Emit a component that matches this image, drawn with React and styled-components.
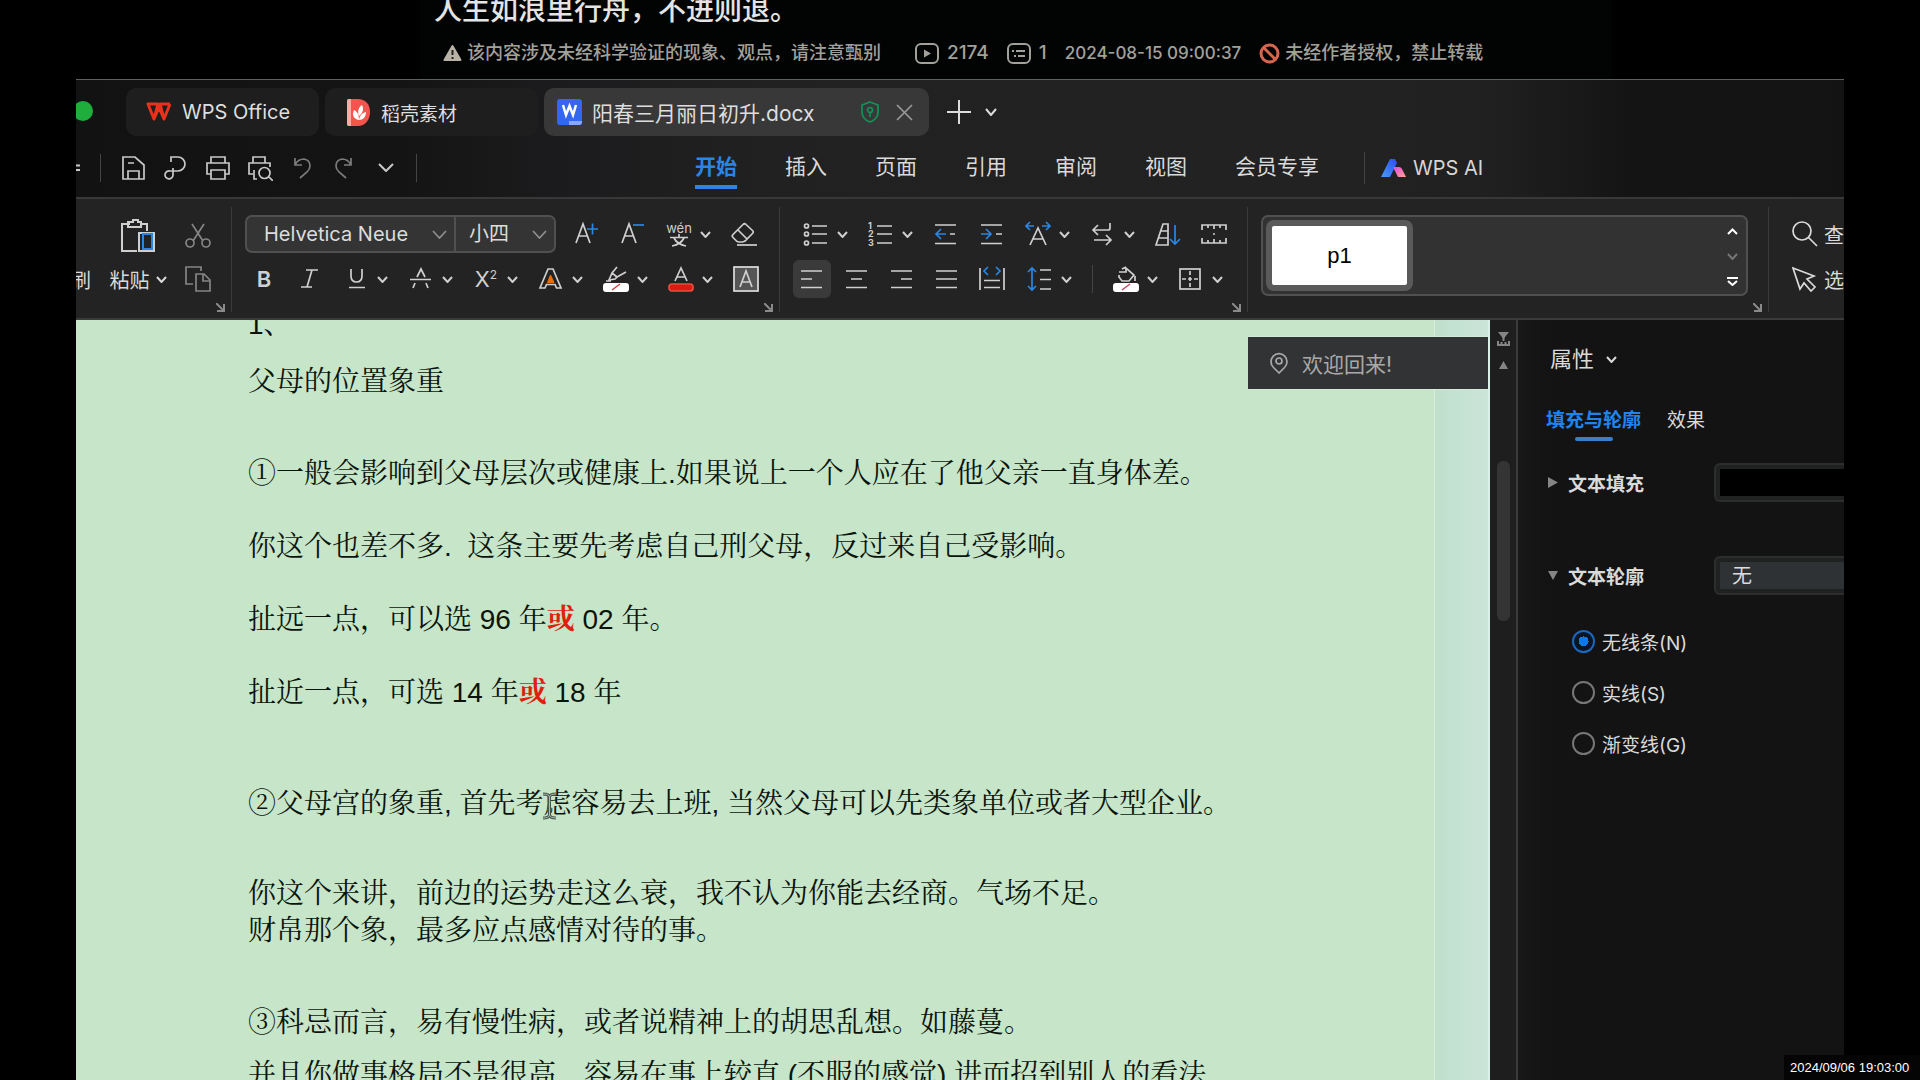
import React from "react";
import styled, { createGlobalStyle } from "styled-components";

const UI = `Inter, "Noto Sans CJK SC", sans-serif`;
const BLUE = "#2b86e3";

const Global = createGlobalStyle`
  *, *::before, *::after { box-sizing: border-box; }
  html, body, #root { height: 100%; }
  body { margin: 0; background: #000; color: #dcdcdc; font-family: ${UI}; overflow: hidden; }
  button { background: none; border: 0; padding: 0; margin: 0; color: inherit; font: inherit; cursor: pointer; }
  p { margin: 0; }
`;

const Page = styled.div`
  display: flex;
  flex-direction: column;
  height: 100vh;
  padding: 0 76px;
  background: #000;
`;

/* ---------- video caption ---------- */
const Caption = styled.header`
  flex: none;
  height: 79px;
  margin: 0 232px 0 344px;
  background: #020403;
  overflow: hidden;
`;
const Title = styled.h1`
  margin: -10px 0 0;
  padding-left: 14px;
  font-size: 28px;
  line-height: 40px;
  font-weight: 500;
  color: #e4e4e4;
`;
const Meta = styled.div`
  display: flex;
  align-items: center;
  padding: 11px 0 0 23px;
  gap: 18px;
  font-size: 18px;
  line-height: 24px;
  font-weight: 500;
  color: #a2a09b;
  white-space: nowrap;
`;
const MetaItem = styled.span`
  display: flex;
  align-items: center;
  gap: ${(p) => p.$gap || 5}px;
  font-size: ${(p) => p.$size || 18}px;
  margin-right: ${(p) => p.$mr || 0}px;
`;

/* ---------- window ---------- */
const Window = styled.main`
  flex: 1;
  min-height: 0;
  display: flex;
  flex-direction: column;
  overflow: hidden;
  border-top: 1px solid #5e6161;
  background: linear-gradient(90deg, #121212 0, #141414 18%, #1c1c1e 28%, #212121 40%, #222 72%, #202020 80%, #141414 88%, #131313 100%);
`;
const TabBar = styled.nav`
  flex: none;
  display: flex;
  align-items: center;
  height: 66px;
`;
const Light = styled.button`
  flex: none;
  width: 20px;
  height: 20px;
  margin: 0 33px 4px -3px;
  border-radius: 50%;
  background: #1fae3c;
`;
const Tab = styled.button`
  display: flex;
  align-items: center;
  gap: ${(p) => p.$gap || 10}px;
  width: ${(p) => p.$w}px;
  height: 48px;
  margin: 0 6px 2px 0;
  padding: 0 16px 0 ${(p) => p.$pad || 20}px;
  border-radius: 10px;
  background: ${(p) => (p.$active ? "#383838" : "#1e1e1e")};
  font-size: ${(p) => p.$size || 20}px;
  color: #dedede;
  white-space: nowrap;
`;
const Grow = styled.span`
  flex: 1;
`;
const TabAction = styled.button`
  display: flex;
  margin: 0 0 2px ${(p) => p.$ml}px;
`;

const ToolRow = styled.div`
  flex: none;
  display: flex;
  align-items: center;
  height: 53px;
  padding-bottom: 8px;
  border-bottom: 2px solid #383838;
`;
const Quick = styled.div`
  display: flex;
  align-items: center;
  gap: 16px;
  margin: 0 17px 0 20px;
`;
const QButton = styled.button`
  display: flex;
  width: ${(p) => (p.$cut ? 24 : 26)}px;
  height: 26px;
  align-items: center;
  justify-content: ${(p) => (p.$cut ? "flex-start" : "center")};
  color: ${(p) => (p.$dim ? "#7c7c7c" : "#c9c9c9")};
`;
const Rule = styled.span`
  flex: none;
  width: 1px;
  height: ${(p) => p.$h || 28}px;
  background: #444;
`;
const Menus = styled.nav`
  display: flex;
  align-items: center;
  gap: 48px;
  margin: 0 45px 0 278px;
`;
const Menu = styled.button`
  height: 42px;
  padding-top: 2px;
  border-bottom: 4px solid ${(p) => (p.$active ? BLUE : "transparent")};
  color: ${(p) => (p.$active ? BLUE : "#dadada")};
  font-size: 21px;
  font-weight: ${(p) => (p.$active ? 600 : 400)};
  white-space: nowrap;
  line-height: 30px;
`;
const AiButton = styled.button`
  display: flex;
  align-items: center;
  gap: 7px;
  margin-left: 16px;
  font-size: 20px;
  color: #d6d6d6;
  white-space: nowrap;
`;

/* ---------- ribbon ---------- */
const Ribbon = styled.section`
  flex: none;
  display: flex;
  height: 121px;
  background: #232323;
  border-bottom: 2px solid #3a3c3a;
  color: #cfcfcf;
`;
const Group = styled.div`
  position: relative;
  display: flex;
  flex-direction: column;
  flex: ${(p) => (p.$grow ? "1 1 0" : "none")};
  min-width: 0;
  gap: 7px;
  margin: 8px 0 6px;
  padding: 8px ${(p) => p.$pr ?? 19}px 0 ${(p) => p.$pl ?? 13}px;
  border-right: ${(p) => (p.$last ? "0" : "1px solid #3a3a3a")};
`;
const Row = styled.div`
  display: flex;
  align-items: center;
  height: 38px;
  gap: ${(p) => p.$gap ?? 20}px;
  padding-left: ${(p) => p.$pl || 0}px;
`;
const Launcher = styled.button`
  position: absolute;
  right: 6px;
  bottom: 0;
  display: flex;
  color: #8a8a8a;
`;
const Clip = styled.div`
  display: grid;
  grid-template-columns: 15px 56px 26px;
  column-gap: 19px;
  align-items: center;
  justify-items: center;
  grid-template-rows: 42px 36px;
  row-gap: 4px;
  font-size: 20px;
`;
const Brush = styled.button`
  width: 20px;
  margin-left: -5px;
  color: #dadada;
  grid-row: 2;
`;
const PasteButton = styled.button`
  display: flex;
  align-items: center;
  gap: 6px;
  color: #dadada;
  white-space: nowrap;
`;
const ToolButton = styled.button`
  position: relative;
  display: flex;
  align-items: center;
  gap: 8px;
  flex: none;
  height: 26px;
  color: ${(p) => (p.$dim ? "#858585" : "#cfcfcf")};
`;
const AlignButton = styled.button`
  display: flex;
  align-items: center;
  justify-content: center;
  width: 38px;
  height: 38px;
  border-radius: 6px;
  background: ${(p) => (p.$active ? "#3a3a3a" : "transparent")};
  color: #cfcfcf;
`;
const Combo = styled.div`
  display: flex;
  width: 311px;
  height: 38px;
  border: 2px solid #505050;
  border-radius: 7px;
  background: #343434;
`;
const ComboPart = styled.label`
  display: flex;
  align-items: center;
  flex: ${(p) => (p.$grow ? 1 : "none")};
  width: ${(p) => p.$w || "auto"};
  padding: 0 7px 0 ${(p) => p.$pl}px;
  border-left: ${(p) => (p.$line ? "2px solid #505050" : "0")};
  color: #8f8f8f;
`;
const Select = styled.select`
  flex: 1;
  min-width: 0;
  appearance: none;
  border: 0;
  padding: 0;
  background: transparent;
  color: #dcdcdc;
  font: 20px/28px ${UI};
  outline: none;
`;
const Gallery = styled.div`
  display: flex;
  justify-content: space-between;
  height: 81px;
  padding: 3px 8px 3px 3px;
  border: 2px solid #505050;
  border-radius: 7px;
  background: #323232;
`;
const StyleCard = styled.button`
  width: 147px;
  height: 71px;
  border: 6px solid #5a5a5a;
  border-radius: 8px;
  background: #fff;
  color: #000;
  font: 22px "Liberation Sans", sans-serif;
`;
const GalleryArrows = styled.div`
  display: flex;
  flex-direction: column;
  justify-content: space-between;
  padding: 8px 0 5px;
`;
const ArrowButton = styled.button`
  display: flex;
  color: ${(p) => (p.$dim ? "#777" : "#fff")};
`;
const SideButton = styled.button`
  display: flex;
  align-items: center;
  gap: 6px;
  font-size: 20px;
  color: #dadada;
`;

/* ---------- body ---------- */
const Body = styled.section`
  flex: 1;
  min-height: 0;
  display: flex;
`;
const Canvas = styled.div`
  position: relative;
  flex: 1;
  min-width: 0;
  display: flex;
  overflow: hidden;
  border-right: 2px solid #dcefe6;
  background: linear-gradient(90deg, #bfe0cb, #cbe5d9) right / 54px 100% no-repeat;
`;
const Sheet = styled.article`
  flex: 1;
  margin-right: 53px;
  padding: 0 0 0 172px;
  border-right: 1px solid #d8eed8;
  background: #c7e5c9;
  color: #0b140c;
  font-family: "Liberation Sans", "Songti SC", "Noto Serif CJK SC", "Noto Sans CJK SC", sans-serif;
  font-size: 28px;
  line-height: 37px;
  font-weight: 400;
  white-space: pre;
  overflow: hidden;
`;
const Para = styled.p`
  margin-top: ${(p) => p.$mt}px;
`;
const Red = styled.b`
  color: #e0200c;
  font-weight: 700;
`;
const Toast = styled.div`
  position: absolute;
  top: 16px;
  right: 0;
  display: flex;
  align-items: center;
  gap: 14px;
  width: 240px;
  height: 54px;
  padding: 0 0 0 22px;
  border: 1px solid #d4ead9;
  border-width: 1px 0;
  background: #323335;
  color: #a9a9a9;
  font-size: 21px;
`;
const Caret = styled.svg`
  position: absolute;
  left: 466px;
  top: 472px;
`;
const ScrollBar = styled.div`
  flex: none;
  display: flex;
  flex-direction: column;
  align-items: center;
  width: 28px;
  padding-top: 12px;
  background: #1e1e1e;
  border-right: 2px solid #3b3b3b;
  color: #858585;
`;
const Thumb = styled.div`
  width: 13px;
  height: 160px;
  margin-top: 92px;
  border-radius: 6px;
  background: #343434;
`;
const Up = styled.button`
  display: flex;
  margin-top: 15px;
`;
const Panel = styled.aside`
  flex: none;
  width: 326px;
  overflow: hidden;
  padding: 23px 0 0 28px;
  background: linear-gradient(90deg, #181818, #131313 30px);
  font-size: 19px;
  color: #dadada;
`;
const PanelTitle = styled.button`
  display: flex;
  align-items: center;
  gap: 12px;
  padding-left: 4px;
  font-size: 22px;
  line-height: 32px;
`;
const PanelTabs = styled.div`
  display: flex;
  gap: 26px;
  margin-top: 32px;
`;
const PanelTab = styled.button`
  display: flex;
  flex-direction: column;
  align-items: center;
  gap: 2px;
  line-height: 28px;
  color: ${(p) => (p.$active ? "#2084ee" : "#dadada")};
  font-weight: ${(p) => (p.$active ? 700 : 400)};
  &::after {
    content: "";
    width: 38px;
    height: 4px;
    border-radius: 2px;
    background: ${(p) => (p.$active ? "#3b7fcb" : "transparent")};
  }
`;
const Field = styled.div`
  display: flex;
  align-items: center;
  height: 39px;
  margin-top: ${(p) => p.$mt}px;
`;
const FieldTitle = styled.button`
  display: flex;
  align-items: center;
  gap: 10px;
  width: 168px;
  padding: 0 0 1px 2px;
  font-weight: 700;
  color: #dadada;
`;
const FieldBox = styled.div`
  flex: 1;
  height: 39px;
  padding: 4px 0 4px 4px;
  border: 2px solid #2c2d2d;
  border-right: 0;
  border-radius: 6px 0 0 6px;
  background: #202121;
`;
const Swatch = styled.button`
  display: block;
  width: 100%;
  height: 100%;
  background: #000;
`;
const LineSelect = styled.select`
  display: block;
  width: 100%;
  height: 100%;
  appearance: none;
  border: 0;
  padding: 1px 0 0 12px;
  background: #2e3234;
  color: #dcdcdc;
  font: 20px/26px ${UI};
`;
const Radios = styled.fieldset`
  display: flex;
  flex-direction: column;
  gap: 23px;
  margin: 32px 0 0;
  padding: 0 0 0 26px;
  border: 0;
`;
const RadioLabel = styled.label`
  display: flex;
  align-items: center;
  gap: 7px;
  height: 28px;
`;
const Radio = styled.input`
  appearance: none;
  width: 23px;
  height: 23px;
  margin: 0;
  border: 2px solid #777;
  border-radius: 50%;
  &:checked {
    border-color: #1868c0;
    background: radial-gradient(circle, #0a78f0 0 5px, #0b1420 5px);
  }
`;
const Clock = styled.time`
  position: fixed;
  right: 0;
  bottom: 0;
  width: 136px;
  height: 25px;
  padding-left: 6px;
  background: #050505;
  color: #fff;
  font: 13px/25px "Liberation Sans", sans-serif;
`;

/* ---------- icons ---------- */
const Drawing = styled.svg`
  flex: none;
  color: ${(p) => p.$tint || "inherit"};
`;
const Svg = ({ w = 26, h = 26, sw = 2, tint, children }) => (
  <Drawing $tint={tint} width={w} height={h} viewBox={`0 0 ${w} ${h}`} fill="none" stroke="currentColor" strokeWidth={sw} aria-hidden="true">
    {children}
  </Drawing>
);
const Chevron = ({ w = 11, h = 7, sw = 2 }) => (
  <Svg w={w} h={h} sw={sw}><path d={`M1 1L${w / 2} ${h - 1}L${w - 1} 1`} /></Svg>
);
const LaunchIcon = () => (
  <Svg w={9} h={9} sw={2}><path d="M0 0L8 8M8 1V8H1" /></Svg>
);

const icons = {
  grow: <><path d="M2 22L9 3L16 22M4.5 15H13.5" /><path stroke={BLUE} d="M13 8H24M18.500 2.500V13.500" /></>,
  shrink: <><path d="M2 22L9 3L16 22M4.5 15H13.5" /><path stroke={BLUE} d="M13 4H24" /></>,
  pinyin: <>
    <text x="13" y="12" textAnchor="middle" fontSize="13" fill="currentColor" stroke="none">wén</text>
    <path d="M13 13V16M4 16.5H22M8 17C10 21 15 24 20 25M18 17C16 21 11 24 6 25" />
  </>,
  eraser: <><path d="M12 3.500Q13.500 2 15 3.500L21.500 9.500Q23 11 21.500 12.500L14 20Q12.500 21 11 21H8Q6.500 21 5.500 20L2 16.500Q.5 15 2 13.500ZM7 9L16 18" /><path d="M6 24H26" /></>,
  bullets: <><circle cx="3.500" cy="5" r="2" /><circle cx="3.500" cy="13" r="2" /><circle cx="3.500" cy="22" r="2" /><path d="M9 5H24M9 13H24M9 22H24" /></>,
  numbers: <>
    <g fontSize="9" fontWeight="700" fill="currentColor" stroke="none"><text x="0" y="8">1</text><text x="0" y="16">2</text><text x="0" y="25">3</text></g>
    <path d="M9 5H24M9 13H24M9 22H24" />
  </>,
  outdent: <><path d="M2 4H23M2 22.500H23M17 13H22" /><path stroke={BLUE} d="M13 13H3M8 8L3 13L8 18" /></>,
  indent: <><path d="M2 4H23M2 22.500H23M17 13H23" /><path stroke={BLUE} d="M2 13H12M7 8L12 13L7 18" /></>,
  scale: <><path d="M5 24L13 7L21 24M8 18H18" /><path stroke={BLUE} d="M9 5H1M5 1L1 5L5 9M17 5H25M21 1L25 5L21 9" /></>,
  wrap: <path d="M20 2V7Q20 9 18 9H3M8 4L3 9L8 14M4 19H21M16 14L21 19L16 24" />,
  sort: <><path d="M8 3H13V24H1ZM6 10H13M4 17H13" /><path stroke={BLUE} d="M20 4V23M15 18L20 23L25 18" /></>,
  ruler: <path d="M1 9V4H25V9M7 4V7M13 4V8M19 4V7M1 17V22H25V17M7 22V19M13 22V18M19 22V19M12 13H14" />,
  italic: <path d="M9 4H21M4 21H15M15 4L10 21" />,
  underline: <path d="M8 3V10Q8 16 13.500 16Q19 16 19 10V3M6 21.500H22" />,
  strike: <path d="M9 11L13 3L17 11M2 13.500H23M7 17L5 22M18 17L20 22" />,
  effect: <><path d="M10 3H15L23 22H18.500L17 18.500H8.500L7 22H2Z" /><path d="M12.500 9L16 16.500H9.500Z" fill="#e8700c" stroke="#e8700c" strokeWidth="1" /></>,
  marker: <><path d="M14 1L9 7M9 7L6 14L12 13L14 11ZM9 7L14 11M14 11L23 6M3 15H8" /><rect x="0" y="17" width="26" height="9" rx="3" fill="#fff" stroke="none" /><path d="M9 24L17 18" stroke="#c44" strokeWidth="1.5" /></>,
  color: <><path d="M7 15L13 2L19 15M9 11H17" /><rect x="1" y="18" width="24" height="7" rx="3" fill="#dd1b10" stroke="#e84c40" /></>,
  shade: <><rect x="1" y="1" width="24" height="24" fill="#555" stroke="#ddd" /><path d="M7 21L13 5L19 21M9 16H17" /></>,
  left: <path d="M2 5H23M2 13H13M2 21.500H23" />,
  center: <path d="M2 5H23M7 13H18M2 21.500H23" />,
  right: <path d="M2 5H23M12 13H23M2 21.500H23" />,
  justify: <path d="M2 5H23M2 13H23M2 21.500H23" />,
  spread: <><path d="M1 2V24M25 2V24M5 14.500H21M5 21.500H21" /><path stroke={BLUE} d="M9 1L5 5L9 9M17 1L21 5L17 9" /></>,
  leading: <><path d="M13 4H24M13 13.500H24M13 23H24" /><path stroke={BLUE} d="M5 2V24M1 6L5 2L9 6M1 20L5 24L9 20" /></>,
  bucket: <><path d="M6 6H13V2L21 9L16 15H9L6 11V9M9 3L13 1" /><path d="M22 10V15" /><rect x="0" y="17" width="26" height="9" rx="3" fill="#fff" stroke="none" /><path d="M9 24L17 18" stroke="#c46" strokeWidth="1.5" /></>,
  borders: <><rect x="2" y="3" width="20" height="20" /><path d="M12 5V22M4 13H21" strokeDasharray="4 2" /></>,
};

const Tool = ({ name, label, drop }) => (
  <ToolButton aria-label={label}>
    <Svg sw={1.7}>{icons[name]}</Svg>
    {drop && <Chevron />}
  </ToolButton>
);
const Align = ({ name, label, active }) => (
  <AlignButton aria-label={label} $active={active}><Svg sw={1.7}>{icons[name]}</Svg></AlignButton>
);
const TextTool = styled.span`
  width: 26px;
  text-align: center;
  font-size: 22px;
  line-height: 26px;
  font-weight: ${(p) => (p.$bold ? 600 : 400)};
  white-space: nowrap;
  sup { font-size: 12px; line-height: 0; vertical-align: 8px; }
`;
const AlignSet = styled.div`
  display: flex;
  gap: 7px;
`;

const QUICK = [
  ["保存", <path d="M2 2H14L23 10V24H2ZM7 24V16H18V24M7 8H13" />],
  ["输出为PDF", <path d="M8 7V2H15A7 7 0 0 1 15 16H7A4 4 0 1 0 10 20V13" />],
  ["打印", <path d="M6 8V2H20V8M6 19H2V8H24V19H20M6 15H20V24H6Z" />],
  ["打印预览", <path d="M6 8V2H18V8M6 19H2V8H23V12M7 15V24H10M21 21L26 26M23 18A5.500 5.500 0 1 1 12 18A5.500 5.500 0 1 1 23 18" />],
  ["撤销", <path d="M6 3V10H13M6 10Q9 4 15 4Q21 5 21 11Q21 14 18 17L11 23" />, true],
  ["恢复", <path d="M20 3V10H13M20 10Q17 4 11 4Q5 5 5 11Q5 14 8 17L15 23" />, true],
];

const PARAS = [
  [-14, "1、"],
  [20, "父母的位置象重"],
  [55, "①一般会影响到父母层次或健康上.如果说上一个人应在了他父亲一直身体差。"],
  [36, "你这个也差不多.  这条主要先考虑自己刑父母，反过来自己受影响。"],
  [36, <>扯远一点，可以选 96 年<Red>或</Red> 02 年。</>],
  [36, <>扯近一点，可选 14 年<Red>或</Red> 18 年</>],
  [74, "②父母宫的象重, 首先考虑容易去上班, 当然父母可以先类象单位或者大型企业。"],
  [53, "你这个来讲，前边的运势走这么衰，我不认为你能去经商。气场不足。"],
  [0, "财帛那个象，最多应点感情对待的事。"],
  [55, "③科忌而言，易有慢性病，或者说精神上的胡思乱想。如藤蔓。"],
  [15, "并且你做事格局不是很高，容易在事上较直 (不服的感觉) 进而招到别人的看法"],
];

export default function App() {
  return (
    <>
      <Global />
      <Page>
        <Caption>
          <Title>人生如浪里行舟，不进则退。</Title>
          <Meta>
            <MetaItem $mr={16}>
              <Svg w={19} h={18}><path d="M9.500 2L17.500 16H1.500Z" fill="#b8b3a6" stroke="#b8b3a6" strokeLinejoin="round" /><path d="M9.500 6V11M9.500 13V15" stroke="#222" /></Svg>
              该内容涉及未经科学验证的现象、观点，请注意甄别
            </MetaItem>
            <MetaItem $size={19} $gap={8}>
              <Svg w={24} h={21}><rect x="1" y="1" width="22" height="19" rx="5" /><path d="M9 6.500V14.500L16 10.500Z" fill="currentColor" stroke="none" /></Svg>
              2174
            </MetaItem>
            <MetaItem $size={19} $gap={8}>
              <Svg w={24} h={21}><rect x="1" y="1" width="22" height="19" rx="5" /><path d="M5 8H7M9 8H18M7 13H9M11 13H18" /></Svg>
              1
            </MetaItem>
            <MetaItem $size={17}>2024-08-15 09:00:37</MetaItem>
            <MetaItem>
              <Svg w={21} h={21} sw={3}><g stroke="#d8664e"><circle cx="10.500" cy="10.500" r="8.500" /><path d="M4.500 4.500L16.500 16.500" /></g></Svg>
              未经作者授权，禁止转载
            </MetaItem>
          </Meta>
        </Caption>

        <Window>
          <TabBar>
            <Light aria-label="缩放窗口" />
            <Tab $w={193}>
              <Svg w={26} h={20} sw={3}><path stroke="#e8321c" strokeLinejoin="round" d="M2 2H12L8 17ZM24 2H14L18 17L24 2M8 17L14 3M18 17L12 3" /></Svg>
              WPS Office
            </Tab>
            <Tab $w={213} $gap={11} $pad={22} $size={19}>
              <Svg w={23} h={27}><path fill="#f5544e" stroke="none" d="M2 0H11C18 0 23 5 23 13C23 21 18 27 11 27H2Q0 27 0 25V2Q0 0 2 0Z" /><path fill="#fbaaa5" stroke="none" d="M0 2Q0 0 2 0H4V27H2Q0 27 0 25Z" /><path fill="#fff" stroke="none" d="M12 21C6 20 5 15 7 11C11 13 12 17 12 21ZM12 17C10 12 12 8 15 6C17 10 16 14 12 17ZM12 21C13 16 15 14 19 13C19 18 16 21 12 21Z" /></Svg>
              稻壳素材
            </Tab>
            <Tab $w={385} $pad={13} $size={21} $active>
              <Svg w={25} h={26}><rect width="25" height="26" rx="3" fill="#3566f2" stroke="none" /><path d="M12 22H25V23Q25 26 22 26H12Z" fill="#86a9fb" stroke="none" /><path stroke="#fff" strokeWidth="2.5" d="M6 6L9 16L12.500 7L16 16L19 6" /></Svg>
              阳春三月丽日初升.docx
              <Grow />
              <Svg w={18} h={22} sw={1.7} tint="#159158"><path d="M9 1L17 4V11Q17 18 9 21Q1 18 1 11V4Z" /><circle cx="9" cy="9" r="2.500" /><path d="M9 12V16" /></Svg>
              <Svg w={24} h={17} sw={1.7} tint="#999"><path d="M8 1L23 16M23 1L8 16" /></Svg>
            </Tab>
            <TabAction aria-label="新建" $ml={12}><Svg w={24} h={24}><path d="M12 0V24M0 12H24" /></Svg></TabAction>
            <TabAction aria-label="更多标签" $ml={14}><Chevron w={12} h={8} /></TabAction>
          </TabBar>

          <ToolRow>
            <QButton aria-label="菜单" $cut><Svg w={4} h={8}><path d="M0 1.500H4M0 6H4" /></Svg></QButton>
            <Rule />
            <Quick>
              {QUICK.map(([label, d, dim]) => (
                <QButton key={label} aria-label={label} $dim={dim}><Svg sw={1.7}>{d}</Svg></QButton>
              ))}
              <QButton aria-label="自定义快速访问"><Chevron w={16} h={9} /></QButton>
            </Quick>
            <Rule />
            <Menus>
              {["开始", "插入", "页面", "引用", "审阅", "视图", "会员专享"].map((m, i) => (
                <Menu key={m} $active={i === 0}>{m}</Menu>
              ))}
            </Menus>
            <Rule $h={32} />
            <AiButton>
              <Svg w={25} h={20}>
                <defs>
                  <linearGradient id="aiBlue" x1="0" y1="1" x2="1" y2="0"><stop offset="0" stopColor="#4a9bf5" /><stop offset="1" stopColor="#2a4df5" /></linearGradient>
                  <linearGradient id="aiPink" x1="0" y1="0" x2="1" y2="1"><stop offset="0" stopColor="#e14be8" /><stop offset="1" stopColor="#ffa08a" /></linearGradient>
                </defs>
                <path fill="url(#aiBlue)" stroke="none" d="M9 1H14L16 5L9 19H0Z" /><path fill="url(#aiPink)" stroke="none" d="M12 9H18Q20 9 21 11L25 19H17Z" />
              </Svg>
              WPS AI
            </AiButton>
          </ToolRow>

          <Ribbon>
            <Group $pl={0} $pr={20}>
              <Clip>
                <span />
                <ToolButton aria-label="粘贴"><Svg w={34} h={34}><path d="M9 5H1V32H16M21 5H26V12M7 3H12V1H17V3H20V8H7Z" /><rect x="18" y="14" width="15" height="18" /><rect x="22" y="15" width="9" height="15" stroke={BLUE} /></Svg></ToolButton>
                <ToolButton aria-label="剪切" $dim><Svg sw={1.7}><path d="M7 1L18 18M19 1L8 18" /><circle cx="5" cy="20" r="4" /><circle cx="21" cy="20" r="4" /></Svg></ToolButton>
                <Brush>刷</Brush>
                <PasteButton>粘贴<Chevron /></PasteButton>
                <ToolButton aria-label="复制" $dim><Svg sw={1.7}><path d="M8 18H1V1H16V5M11 8H19L25 14V25H11ZM18 8V15H25" /></Svg></ToolButton>
              </Clip>
              <Launcher aria-label="剪贴板"><LaunchIcon /></Launcher>
            </Group>

            <Group $pr={20}>
              <Row $gap={18}>
                <Combo>
                  <ComboPart $grow $pl={17}>
                    <Select aria-label="字体"><option>Helvetica Neue</option></Select>
                    <Chevron w={15} h={9} sw={1.7} />
                  </ComboPart>
                  <ComboPart $w="100px" $pl={13} $line>
                    <Select aria-label="字号"><option>小四</option></Select>
                    <Chevron w={15} h={9} sw={1.7} />
                  </ComboPart>
                </Combo>
                <Row>
                  <Tool name="grow" label="增大字号" />
                  <Tool name="shrink" label="减小字号" />
                  <Tool name="pinyin" label="拼音指南" drop />
                  <Tool name="eraser" label="清除格式" />
                </Row>
              </Row>
              <Row $pl={6}>
                <ToolButton aria-label="加粗"><TextTool $bold>B</TextTool></ToolButton>
                <Tool name="italic" label="倾斜" />
                <Tool name="underline" label="下划线" drop />
                <Tool name="strike" label="删除线" drop />
                <ToolButton aria-label="上标"><TextTool>X<sup>2</sup></TextTool><Chevron /></ToolButton>
                <Tool name="effect" label="文字效果" drop />
                <Tool name="marker" label="突出显示" drop />
                <Tool name="color" label="字体颜色" drop />
                <Tool name="shade" label="字符底纹" />
              </Row>
              <Launcher aria-label="字体设置"><LaunchIcon /></Launcher>
            </Group>

            <Group $pr={20}>
              <Row $pl={10}>
                <Tool name="bullets" label="项目符号" drop />
                <Tool name="numbers" label="编号" drop />
                <Tool name="outdent" label="减少缩进" />
                <Tool name="indent" label="增加缩进" />
                <Tool name="scale" label="字符缩放" drop />
                <Tool name="wrap" label="换行" drop />
                <Tool name="sort" label="排序" />
                <Tool name="ruler" label="制表位" />
              </Row>
              <Row $gap={16}>
                <AlignSet>
                  <Align name="left" label="左对齐" active />
                  <Align name="center" label="居中" />
                  <Align name="right" label="右对齐" />
                  <Align name="justify" label="两端对齐" />
                  <Align name="spread" label="分散对齐" />
                </AlignSet>
                <Row>
                  <Tool name="leading" label="行距" drop />
                  <Rule />
                  <Tool name="bucket" label="底纹" drop />
                  <Tool name="borders" label="边框" drop />
                </Row>
              </Row>
              <Launcher aria-label="段落设置"><LaunchIcon /></Launcher>
            </Group>

            <Group $grow $pr={20}>
              <Gallery>
                <StyleCard>p1</StyleCard>
                <GalleryArrows>
                  <ArrowButton aria-label="上一行"><Svg w={11} h={7}><path d="M1 6L5.500 1.500L10 6" /></Svg></ArrowButton>
                  <ArrowButton aria-label="下一行" $dim><Chevron /></ArrowButton>
                  <ArrowButton aria-label="展开样式"><Svg w={11} h={9}><path d="M0 1H11M1 4L5.500 8L10 4" /></Svg></ArrowButton>
                </GalleryArrows>
              </Gallery>
              <Launcher aria-label="样式设置"><LaunchIcon /></Launcher>
            </Group>

            <Group $last $pl={23} $pr={0}>
              <Row><SideButton><Svg sw={1.7}><circle cx="10" cy="10" r="9" /><path d="M16 16L25 25" /></Svg>查</SideButton></Row>
              <Row><SideButton><Svg sw={1.7}><path d="M1 2L22 10L15 13L23 21L19 25L12 17L8 23Z" /></Svg>选</SideButton></Row>
            </Group>
          </Ribbon>

          <Body>
            <Canvas>
              <Sheet>
                {PARAS.map(([mt, text], i) => <Para key={i} $mt={mt}>{text}</Para>)}
              </Sheet>
              <Toast role="status">
                <Svg w={18} h={22} sw={1.7}><path d="M9 21L3.500 15.500A8 8 0 1 1 14.500 15.500Z" /><circle cx="9" cy="9" r="3" /></Svg>
                欢迎回来!
              </Toast>
              <Caret width="15" height="28" viewBox="0 0 15 28" fill="none" aria-hidden="true">
                <path d="M1 2Q7 2 7.500 5Q8 2 14 2M7.500 5V23M1 26Q7 26 7.500 23Q8 26 14 26M5 18H10" stroke="#46584a" strokeWidth="3" />
                <path d="M1 2Q7 2 7.500 5Q8 2 14 2M7.500 5V23M1 26Q7 26 7.500 23Q8 26 14 26" stroke="#a9bcac" strokeWidth="1" />
              </Caret>
            </Canvas>
            <ScrollBar>
              <Svg w={13} h={14}><path d="M1 0H12L6.500 7Z" fill="currentColor" stroke="none" /><path d="M1 9V13H12V9M4.500 10V13M8.500 10V13M6.500 5V9" /></Svg>
              <Up aria-label="向上滚动"><Svg w={9} h={8}><path d="M4.500 0L9 8H0Z" fill="currentColor" stroke="none" /></Svg></Up>
              <Thumb />
            </ScrollBar>
            <Panel>
              <PanelTitle>属性<Chevron /></PanelTitle>
              <PanelTabs>
                <PanelTab $active>填充与轮廓</PanelTab>
                <PanelTab>效果</PanelTab>
              </PanelTabs>
              <Field $mt={22}>
                <FieldTitle><Svg w={10} h={11}><path d="M0 0L10 5.500L0 11Z" fill="#858585" stroke="none" /></Svg>文本填充</FieldTitle>
                <FieldBox><Swatch aria-label="填充颜色" /></FieldBox>
              </Field>
              <Field $mt={54}>
                <FieldTitle><Svg w={10} h={9}><path d="M0 0H10L5 9Z" fill="#858585" stroke="none" /></Svg>文本轮廓</FieldTitle>
                <FieldBox><LineSelect aria-label="文本轮廓"><option>无</option></LineSelect></FieldBox>
              </Field>
              <Radios>
                <RadioLabel><Radio type="radio" name="line" defaultChecked />无线条(N)</RadioLabel>
                <RadioLabel><Radio type="radio" name="line" />实线(S)</RadioLabel>
                <RadioLabel><Radio type="radio" name="line" />渐变线(G)</RadioLabel>
              </Radios>
            </Panel>
          </Body>
        </Window>
      </Page>
      <Clock>2024/09/06 19:03:00</Clock>
    </>
  );
}
